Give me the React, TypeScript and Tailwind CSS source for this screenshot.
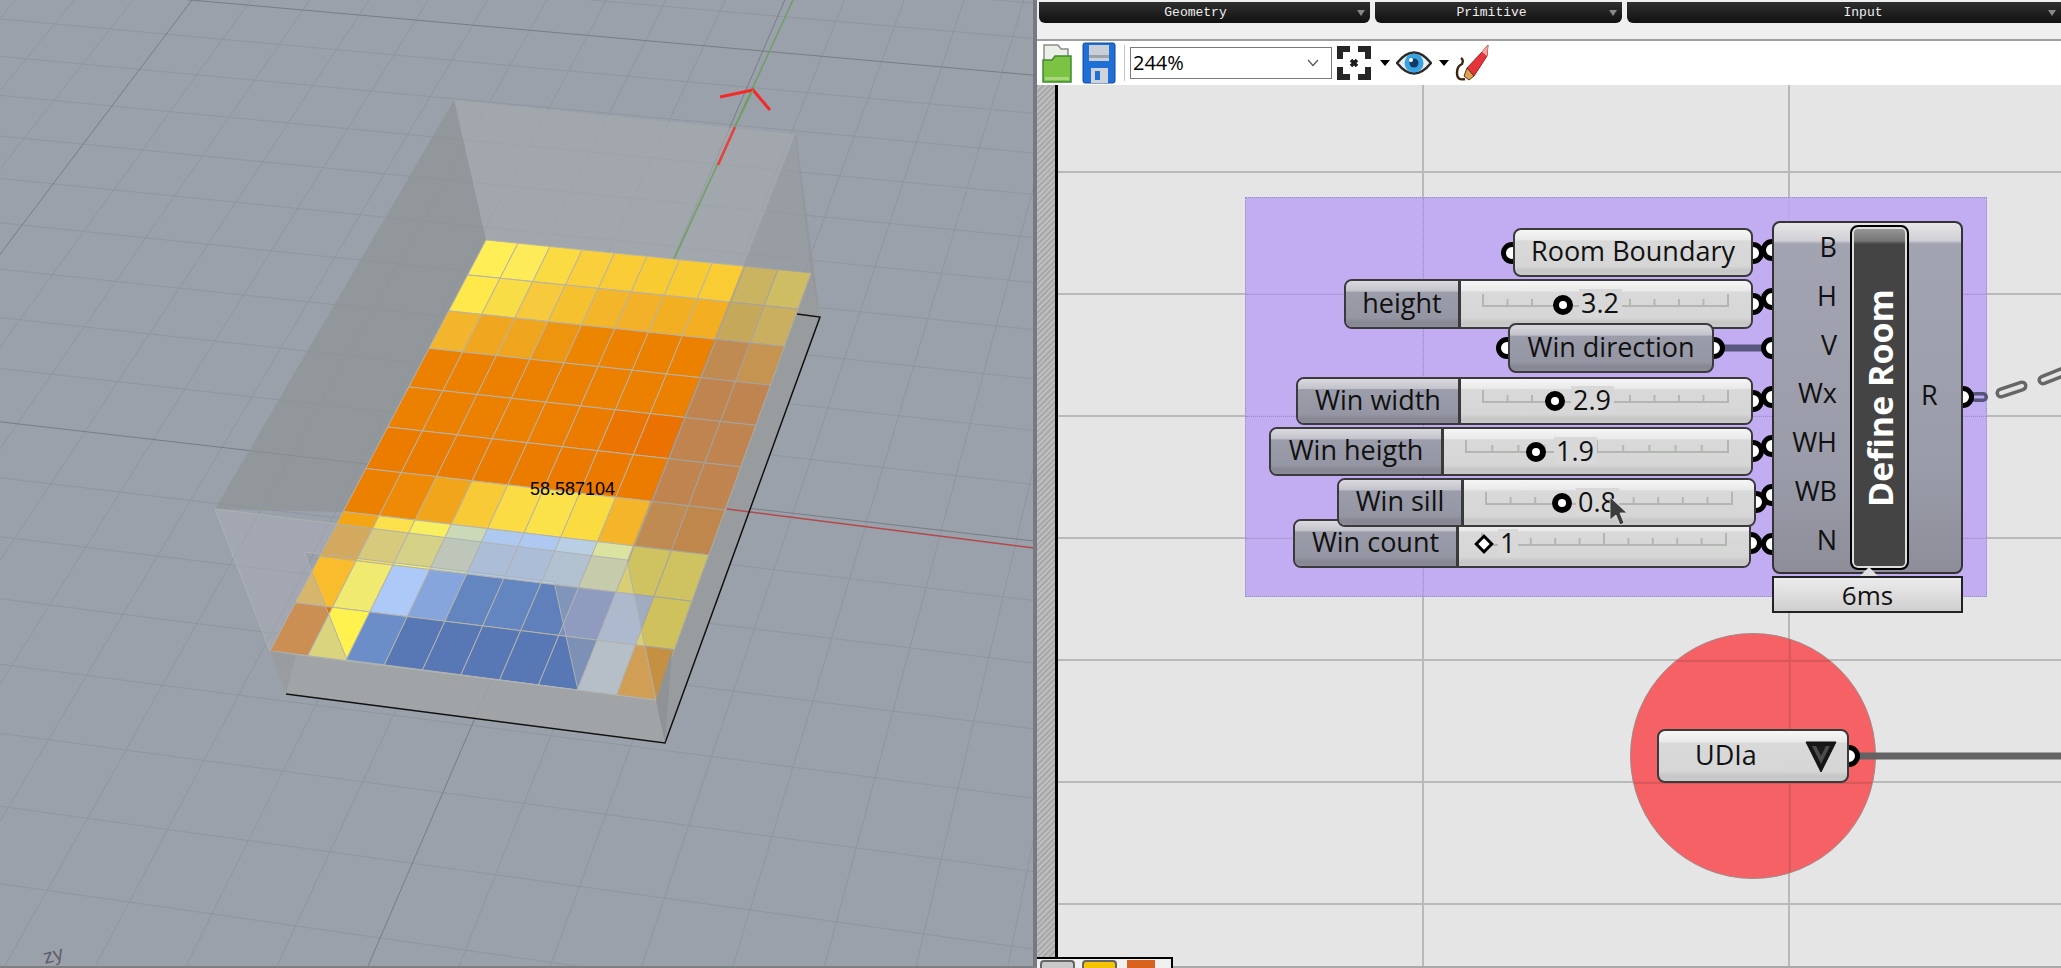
import React from 'react';

type P = [number, number];

// square-to-quad mapping for the floor of the room
function makeMap(p0: P, p1: P, p2: P, p3: P) {
  const dx1 = p1[0] - p2[0], dx2 = p3[0] - p2[0], sx = p0[0] - p1[0] + p2[0] - p3[0];
  const dy1 = p1[1] - p2[1], dy2 = p3[1] - p2[1], sy = p0[1] - p1[1] + p2[1] - p3[1];
  const den = dx1 * dy2 - dx2 * dy1;
  const g = (sx * dy2 - dx2 * sy) / den, h = (dx1 * sy - sx * dy1) / den;
  const a = p1[0] - p0[0] + g * p1[0], b = p3[0] - p0[0] + h * p3[0];
  const d = p1[1] - p0[1] + g * p1[1], e = p3[1] - p0[1] + h * p3[1];
  return (u: number, v: number): P => {
    const w = g * u + h * v + 1;
    return [(a * u + b * v + p0[0]) / w, (d * u + e * v + p0[1]) / w];
  };
}

const floor = makeMap([486, 240], [811, 273], [656, 700], [270, 651]);

const cells = [
  ['#ffee55', '#fdeb5a', '#fadc42', '#f9d03c', '#f9cc35', '#f9cb33', '#f9cb33', '#f9cc33', '#f6cf3c', '#ffe040'],
  ['#fee84a', '#f9dd47', '#f7c93c', '#f5c12f', '#f3b52a', '#f3b12a', '#f2af22', '#f3ae22', '#f0bc30', '#f6c83c'],
  ['#f3b52c', '#f0a61e', '#f0a51e', '#ee9510', '#ec8600', '#ec8200', '#ec8100', '#ec8100', '#e58a1e', '#ee9a20'],
  ['#ec8000', '#ec8000', '#ec8000', '#ec8000', '#ec8000', '#ec8000', '#ec8000', '#ec8000', '#e47f1c', '#e47f1c'],
  ['#ec8000', '#ec8000', '#ec8000', '#ec8000', '#ec7e00', '#ec7c00', '#eb7500', '#eb7200', '#e47f1c', '#e47f1c'],
  ['#ec7c00', '#ec7c00', '#ec7c00', '#ec7c00', '#ec7c00', '#ec7a00', '#ec7a00', '#ec7c00', '#e47f1c', '#e47f1c'],
  ['#ec8000', '#ee8a05', '#f1a51a', '#f8cb36', '#fbdc44', '#fbe24a', '#fadb40', '#f4b52a', '#e58a1e', '#e48418'],
  ['#f3a514', '#fbe04c', '#f8ef60', '#ccd9b8', '#adc9f0', '#adc9f2', '#b9d0e4', '#dce3a0', '#ffe93a', '#ffe83c'],
  ['#f8bc2c', '#f0eb70', '#adc9f8', '#85a5dc', '#6385c0', '#6385c0', '#6080bc', '#788cc6', '#b0c3e0', '#ffe935'],
  ['#e57300', '#fff24e', '#6b8ec8', '#5877b5', '#5877b5', '#5877b5', '#5877b5', '#5877b5', '#bfccd5', '#ee9304'],
];

const pts = (list: P[]) => list.map(p => `${p[0].toFixed(1)},${p[1].toFixed(1)}`).join(' ');

function Viewport() {
  const minor: React.ReactNode[] = [];
  const major: React.ReactNode[] = [];
  for (let i = -40; i <= 30; i++) {
    const t = 0.58 + i * 0.2;
    const a = floor(t, -14), b = floor(t, 5);
    const el = <line key={'u' + i} x1={a[0]} y1={a[1]} x2={b[0]} y2={b[1]} />;
    if (i % 10 === 0) major.push(el);
    else minor.push(el);
  }
  for (let i = -100; i <= 40; i++) {
    const t = 0.59 + i * 0.125;
    const a = floor(-14, t), b = floor(14, t);
    const el = <line key={'v' + i} x1={a[0]} y1={a[1]} x2={b[0]} y2={b[1]} />;
    if (i % 10 === 0) major.push(el);
    else minor.push(el);
  }
  return (
    <svg width="1037" height="968" viewBox="0 0 1037 968" className="block">
      <rect width="1037" height="968" fill="#9ba1ab" />
      <g stroke="#90969f" strokeWidth="1" fill="none">{minor}</g>
      <g stroke="#777c85" strokeWidth="1" fill="none">{major}</g>
      {/* base plane and walls */}
      <polygon points={pts([[811, 273], [820, 317], [665, 743], [286, 694], [270, 651], [656, 700]])} fill="rgba(162,165,166,0.85)" />
      <polygon points={pts([[811, 273], [820, 317], [665, 743], [656, 700]])} fill="#989c9e" />
      <line x1="727" y1="509" x2="1034" y2="548" stroke="#b5484a" strokeWidth="1.5" />
      <polygon points={pts([[454, 100], [795, 134], [811, 273], [486, 240]])} fill="rgba(165,170,172,0.65)" />
      <polygon points={pts([[454, 100], [486, 240], [344, 512], [215, 509]])} fill="rgba(142,147,150,0.7)" />
      <polygon points={pts([[796, 133], [811, 273], [820, 317]])} fill="#94989b" />
      <line x1="674" y1="259" x2="793" y2="0" stroke="#6f9f62" strokeWidth="1.5" />
      <polyline points={pts([[797, 314], [820, 317], [665, 743], [286, 694]])} fill="none" stroke="#111" strokeWidth="1.5" />
      {/* floor mesh */}
      <g stroke="#b6b4aa" strokeWidth="1">
        {cells.map((row, r) => row.map((c, i) => (
          <polygon
            key={r + '-' + i}
            fill={c}
            points={pts([floor(i / 10, r / 10), floor((i + 1) / 10, r / 10), floor((i + 1) / 10, (r + 1) / 10), floor(i / 10, (r + 1) / 10)])}
          />
        )))}
      </g>
      <polygon points={pts([[796, 133], [627, 560], [656, 700], [811, 273]])} fill="rgba(140,140,150,0.42)" />
      <path
        d="M215 509 L627 560 L656 700 L270 651 Z M304 552 L554 582 L578 690 L347 660 Z"
        fillRule="evenodd"
        fill="rgba(170,175,185,0.45)"
        stroke="#afb2b3"
        strokeWidth="1"
      />
      <polygon points={pts([[270, 651], [286, 694], [296, 655]])} fill="#999da0" />
      <polygon points={pts([[656, 700], [665, 743], [672, 650]])} fill="#8f9396" />
      {/* gizmo */}
      <path d="M718 165 L735 127" stroke="#e8403e" strokeWidth="2.5" fill="none" />
      <path d="M720 97 L753 90 L770 110" stroke="#f52a28" strokeWidth="3" fill="none" />
      <line x1="735" y1="127" x2="753" y2="90" stroke="#6f9f62" strokeWidth="1.5" />
      <text x="530" y="495" fontSize="18" fill="#000" fontFamily="'Liberation Sans', sans-serif">58.587104</text>
      <text x="45" y="964" fontSize="20" fill="#5f5f68" transform="rotate(-14 45 964)" fontFamily="'Liberation Sans', sans-serif">zy</text>
      <rect x="1033" y="0" width="4" height="968" fill="#767a80" />
      <rect x="0" y="966" width="1037" height="2" fill="#7c7f84" />
    </svg>
  );
}

const lightBg = 'bg-[linear-gradient(#f6f6f6_0%,#e9e9e9_22%,#d9d9d9_24%,#d6d6d6_80%,#c6c6c6_90%,#cacaca_100%)]';
const darkBg = 'bg-[linear-gradient(#d9d9de_0%,#c3c3cb_22%,#9c9dab_24%,#9596a3_80%,#868793_90%,#8a8b97_100%)]';
const nodeText = "text-[27px] leading-none text-[#111] font-['Open_Sans',sans-serif]";
const ring = 'size-[22px] rounded-full border-[5px] border-black bg-white';

function Port({ className }: { className: string }) {
  return <div className={`absolute ${ring} ${className}`} />;
}

function Track({ from, to, y }: { from: number; to: number; y: number }) {
  const step = (to - from) / 10;
  return (
    <svg className="absolute left-0 top-0" width="320" height="48">
      <g stroke="#b3b7b2" strokeWidth="2" fill="none">
        <path d={`M${from} ${y - 12} V${y} H${to} V${y - 12}`} />
        {[1, 2, 3, 4, 5, 6, 7, 8, 9].map(i => (
          <line key={i} x1={from + i * step} x2={from + i * step} y1={y - (i === 5 ? 12 : 7)} y2={y} />
        ))}
      </g>
    </svg>
  );
}

function Slider(props: {
  className: string;
  labelClass: string;
  label: string;
  value: string;
  from: number;
  to: number;
  y: number;
  grip: string;
  text: string;
  diamond?: boolean;
}) {
  return (
    <div className={`absolute flex overflow-hidden rounded-lg border-2 border-[#3a3a3a] ${nodeText} ${props.className}`}>
      <div className={`flex h-full shrink-0 items-center justify-center border-r-[3px] border-[#3a3a3a] pb-1 ${darkBg} ${props.labelClass}`}>
        {props.label}
      </div>
      <div className={`relative h-full flex-1 ${lightBg}`}>
        <Track from={props.from} to={props.to} y={props.y} />
        <span className={`absolute bg-[#d8d8d8] pl-[2px] pr-[3px] ${props.text}`}>{props.value}</span>
        {props.diamond ? (
          <div className={`absolute size-[14px] rotate-45 border-[3px] border-black bg-white ${props.grip}`} />
        ) : (
          <div className={`absolute size-[20px] rounded-full border-[6px] border-black bg-white ${props.grip}`} />
        )}
      </div>
    </div>
  );
}

function FolderIcon() {
  return (
    <svg width="30" height="42" viewBox="0 0 30 42">
      <path d="M2 3 H16 L19 7 H26 V22 H2 Z" fill="#eceee8" stroke="#8b8f88" strokeWidth="1.5" />
      <path d="M1 18 L10 18 L13 14 H29 V40 H1 Z" fill="#7cc243" stroke="#3f8a33" strokeWidth="1.5" />
      <rect x="3" y="35" width="24" height="3" fill="#a8d67a" />
    </svg>
  );
}

function SaveIcon() {
  return (
    <svg width="34" height="42" viewBox="0 0 34 42">
      <path d="M3 1 H31 Q33 1 33 3 V39 Q33 41 31 41 H3 Q1 41 1 39 V3 Q1 1 3 1 Z" fill="#1f6fd6" stroke="#0f4a9c" />
      <rect x="7" y="3" width="20" height="16" fill="#c9cfd6" />
      <rect x="7" y="13" width="20" height="3" fill="#9aa2ab" />
      <rect x="9" y="26" width="17" height="15" fill="#cfd4da" />
      <rect x="13" y="29" width="5" height="9" fill="#1f6fd6" />
    </svg>
  );
}

function FocusIcon() {
  return (
    <svg width="34" height="34" viewBox="0 0 34 34">
      <g fill="none" stroke="#262626" strokeWidth="6">
        <path d="M3 13 V3 H13" />
        <path d="M21 3 H31 V13" />
        <path d="M31 21 V31 H21" />
        <path d="M13 31 H3 V21" />
      </g>
      <path d="M14 14 L20 20 M20 14 L14 20" stroke="#1c1c1c" strokeWidth="3.5" />
    </svg>
  );
}

function EyeIcon() {
  return (
    <svg width="36" height="28" viewBox="0 0 36 28">
      <path d="M1 14 Q18 -7 35 14 Q18 35 1 14 Z" fill="#e9eef0" stroke="#2a2a2a" strokeWidth="2.5" />
      <circle cx="18" cy="14" r="9.5" fill="#39a2e0" />
      <circle cx="18" cy="14" r="4.5" fill="#123a66" />
      <circle cx="15" cy="11" r="2" fill="#fff" />
    </svg>
  );
}

function PenIcon() {
  return (
    <svg width="34" height="38" viewBox="0 0 34 38">
      <path d="M12 24 L27 8 L33 1 L32 12 L19 32 Z" fill="#e3343a" stroke="#a3201f" />
      <path d="M27 8 L33 1 L32 12 Z" fill="#f0a8a0" />
      <path d="M12 24 L19 32 L14 36 L9 32 Z" fill="#e0a050" stroke="#5a3014" />
      <path d="M10 35 Q2 37 2 29 Q2 22 7 20 Q9 16 6 14" fill="none" stroke="#3f2414" strokeWidth="2.4" />
    </svg>
  );
}

function Caret() {
  return <div className="size-0 border-x-[5px] border-t-[6px] border-x-transparent border-t-black" />;
}

function Tab({ className, label }: { className: string; label: string }) {
  return (
    <div className={`relative flex h-[21px] items-center justify-center rounded-b-md bg-[linear-gradient(#2f2f2f,#111)] font-['Liberation_Mono',monospace] text-[13px] text-[#eee] ${className}`}>
      {label}
      <span className="absolute right-[5px] top-[8px] size-0 border-x-[4px] border-t-[6px] border-x-transparent border-t-[#888]" />
    </div>
  );
}

function Canvas() {
  return (
    <div className="relative h-full flex-1 overflow-hidden bg-[#e5e5e5]">
      <svg className="absolute left-0 top-0" width="1003" height="883">
        <g stroke="#b9b9b9" strokeWidth="2">
          {[87, 209, 331, 453, 575, 697, 819].map(y => (
            <line key={y} x1="0" x2="1003" y1={y} y2={y} />
          ))}
          <line x1="365" x2="365" y1="0" y2="883" />
          <line x1="731" x2="731" y1="0" y2="883" />
        </g>
      </svg>

      <div className="absolute left-[187px] top-[112px] h-[400px] w-[742px] border border-dotted border-[#8f8fc0] bg-[#bea6f4]/90">
        <div className="absolute left-0 top-[96px] w-full border-t border-dotted border-[#9a8fc8]" />
        <div className="absolute left-0 top-[218px] w-full border-t border-dotted border-[#9a8fc8]" />
        <div className="absolute left-0 top-[340px] w-full border-t border-dotted border-[#9a8fc8]" />
        <div className="absolute left-[177px] top-0 h-full border-l border-dotted border-[#9a8fc8]" />
      </div>
      <div className="absolute left-[572px] top-[548px] size-[246px] overflow-hidden rounded-full border border-[#a08a8a] bg-[#f65256]/90">
        <div className="absolute left-0 top-[26px] h-[2px] w-full bg-[#d9585b]" />
        <div className="absolute left-0 top-[148px] h-[2px] w-full bg-[#d9585b]" />
        <div className="absolute left-[158px] top-0 h-full w-[2px] bg-[#d9585b]" />
      </div>

      {/* wires */}
      <svg className="absolute left-0 top-0" width="1003" height="883">
        <line x1="656" x2="714" y1="263" y2="263" stroke="#5b5880" strokeWidth="7" />
        <line x1="791" x2="1003" y1="671" y2="671" stroke="#636363" strokeWidth="7" />
        <g fill="none" strokeLinecap="round">
          <path d="M917 312 H925" stroke="#55557a" strokeWidth="10" />
          <path d="M917 312 H925" stroke="#bea6f4" strokeWidth="3" />
          <path d="M943 308 L964 301" stroke="#666" strokeWidth="11" />
          <path d="M943 308 L964 301" stroke="#e5e5e5" strokeWidth="4" />
          <path d="M985 295 L1010 285" stroke="#666" strokeWidth="11" />
          <path d="M985 295 L1010 285" stroke="#e5e5e5" strokeWidth="4" />
        </g>
      </svg>

      {/* ports */}
      <Port className="left-[443px] top-[157px]" />
      <Port className="left-[684px] top-[157px]" />
      <Port className="left-[684px] top-[208px]" />
      <Port className="left-[438px] top-[252px]" />
      <Port className="left-[645px] top-[252px]" />
      <Port className="left-[684px] top-[305px]" />
      <Port className="left-[684px] top-[355px]" />
      <Port className="left-[687px] top-[406px]" />
      <Port className="left-[682px] top-[447px]" />
      <div className="absolute left-[703px] top-[154px] flex flex-col gap-[27px]">
        <div className={ring} />
        <div className={ring} />
        <div className={ring} />
        <div className={ring} />
        <div className={ring} />
        <div className={ring} />
        <div className={ring} />
      </div>
      <Port className="left-[894px] top-[301px]" />
      <Port className="left-[780px] top-[660px]" />

      {/* Define Room */}
      <div className={`absolute left-[714px] top-[136px] flex h-[353px] w-[191px] rounded-lg border-2 border-[#333] ${nodeText} bg-[linear-gradient(#e6e6e8_0%,#d0d0d6_5%,#a3a4b2_6%,#9b9ca9_70%,#8d8e9a_100%)]`}>
        <div className="mt-[10px] flex h-[320px] w-[63px] flex-col items-end justify-between">
          <span>B</span>
          <span>H</span>
          <span>V</span>
          <span>Wx</span>
          <span>WH</span>
          <span>WB</span>
          <span>N</span>
        </div>
        <div className="ml-[13px] mt-[2px] flex h-[345px] w-[59px] items-center justify-center rounded-lg border-2 border-black bg-[linear-gradient(#9a9a9a_0%,#777_4%,#444_5%,#444_100%)] shadow-[inset_0_0_0_2px_#ddd]">
          <span className="rotate-180 whitespace-nowrap font-['Open_Sans',sans-serif] text-[34px] font-bold leading-none text-white [writing-mode:vertical-rl]">
            Define Room
          </span>
        </div>
        <div className="ml-[12px] flex items-center pb-[6px]">R</div>
      </div>
      <div className="absolute left-[714px] top-[491px] flex h-[37px] w-[191px] items-center justify-center border-2 border-[#222] bg-[linear-gradient(#ececec,#cfcfcf)] font-['Open_Sans',sans-serif] text-[26px] leading-none text-[#111]">
        6ms
      </div>
      <div className="absolute left-[802px] top-[482px] size-0 border-x-[9px] border-b-[9px] border-x-transparent border-b-[#dfdfe2]" />

      {/* params */}
      <div className={`absolute left-[455px] top-[143px] flex h-[49px] w-[240px] items-center justify-center rounded-lg border-2 border-[#3a3a3a] pb-1 ${lightBg} ${nodeText}`}>
        Room Boundary
      </div>
      <Slider className="left-[286px] top-[194px] h-[50px] w-[409px]" labelClass="w-[115px]" label="height" value="3.2" from={22} to={267} y={25} grip="left-[92px] top-[14px]" text="left-[118px] top-[8px]" />
      <div className={`absolute left-[450px] top-[238px] flex h-[50px] w-[206px] items-center justify-center rounded-lg border-2 border-[#3a3a3a] pb-1 ${darkBg} ${nodeText}`}>
        Win direction
      </div>
      <Slider className="left-[238px] top-[292px] h-[48px] w-[457px]" labelClass="w-[163px]" label="Win width" value="2.9" from={22} to={267} y={23} grip="left-[84px] top-[12px]" text="left-[110px] top-[7px]" />
      <Slider className="left-[235px] top-[434px] h-[49px] w-[458px]" labelClass="w-[164px]" label="Win count" value="1" from={23} to={267} y={24} diamond grip="left-[18px] top-[16px]" text="left-[39px] top-[8px]" />
      <Slider className="left-[211px] top-[342px] h-[49px] w-[484px]" labelClass="w-[173px]" label="Win heigth" value="1.9" from={22} to={284} y={23} grip="left-[82px] top-[13px]" text="left-[110px] top-[8px]" />
      <Slider className="left-[279px] top-[393px] h-[49px] w-[419px]" labelClass="w-[125px]" label="Win sill" value="0.8" from={22} to={268} y={24} grip="left-[88px] top-[13px]" text="left-[112px] top-[8px]" />

      {/* UDIa */}
      <div className={`absolute left-[599px] top-[644px] flex h-[54px] w-[192px] items-center justify-between rounded-lg border-2 border-[#3a3a3a] pb-1 pl-[36px] pr-[9px] ${lightBg} ${nodeText}`}>
        UDIa
        <svg className="mt-1" width="34" height="34" viewBox="0 0 34 34">
          <path d="M2 3 H32 L17 33 Z" fill="#161616" stroke="#111" strokeWidth="1" />
          <path d="M8 7 H26 L17 25 Z" fill="#4c4c4c" />
          <path d="M12 7 H22 L17 17 Z" fill="#1a1a1a" />
        </svg>
      </div>

      {/* cursor */}
      <svg className="absolute left-[551px] top-[411px]" width="20" height="30" viewBox="0 0 20 30">
        <path d="M1 1 L18 17 L11 17 L15 27 L11 29 L7 19 L1 24 Z" fill="#3c3c3c" stroke="#e8e8e8" strokeWidth="0.8" />
      </svg>

      <div className="absolute bottom-0 left-0 h-[2px] w-full bg-[#a9a9a9]" />
    </div>
  );
}

export default function App() {
  return (
    <div className="relative flex h-[968px] w-[2061px] overflow-hidden bg-[#efefef]">
      <div className="h-full w-[1037px] shrink-0">
        <Viewport />
      </div>
      <div className="flex h-full flex-1 flex-col">
        <div className="flex h-[41px] shrink-0 items-start gap-[5px] border-b-2 border-[#a0a0a0] bg-[#efefef] pl-[2px] pt-[2px]">
          <Tab className="w-[331px] pr-[18px]" label="Geometry" />
          <Tab className="w-[247px] pr-[14px]" label="Primitive" />
          <Tab className="flex-1 rounded-br-none pl-[38px]" label="Input" />
        </div>
        <div className="flex h-[44px] shrink-0 items-center bg-white pl-[5px]">
          <FolderIcon />
          <div className="ml-[10px]"><SaveIcon /></div>
          <div className="ml-[8px] h-[36px] w-px bg-[#c4c4c4]" />
          <div className="ml-[5px] flex h-[32px] w-[202px] items-center justify-between border border-[#7a7a7a] bg-white pl-[2px] pr-3 font-['Open_Sans',sans-serif] text-[20px] text-black">
            244%
            <svg width="12" height="8" viewBox="0 0 12 8">
              <path d="M1 1 L6 6.5 L11 1" fill="none" stroke="#555" strokeWidth="1.2" />
            </svg>
          </div>
          <div className="ml-[5px]"><FocusIcon /></div>
          <div className="ml-[9px]"><Caret /></div>
          <div className="ml-[6px]"><EyeIcon /></div>
          <div className="ml-[7px]"><Caret /></div>
          <div className="ml-[6px]"><PenIcon /></div>
        </div>
        <div className="flex min-h-0 flex-1">
          <div className="h-full w-[18px] shrink-0 bg-[repeating-linear-gradient(135deg,#a9a9a9_0px,#a9a9a9_2px,#bdbdbd_2px,#bdbdbd_4px)]" />
          <div className="h-full w-[3px] shrink-0 bg-black" />
          <Canvas />
        </div>
      </div>
      <div className="absolute left-[1037px] top-[957px] flex h-[11px] w-[136px] items-start border-r-2 border-t-2 border-black bg-[#f0f0f0] pl-[3px] pt-[1px]">
        <div className="h-[9px] w-[35px] rounded-t border-2 border-b-0 border-[#666] bg-[#c9c9c9]" />
        <div className="ml-[7px] h-[9px] w-[35px] rounded-t border-2 border-b-0 border-[#666] bg-[#f5c400]" />
        <div className="ml-[10px] h-[9px] w-[28px] bg-[#d9621e]" />
      </div>
    </div>
  );
}
